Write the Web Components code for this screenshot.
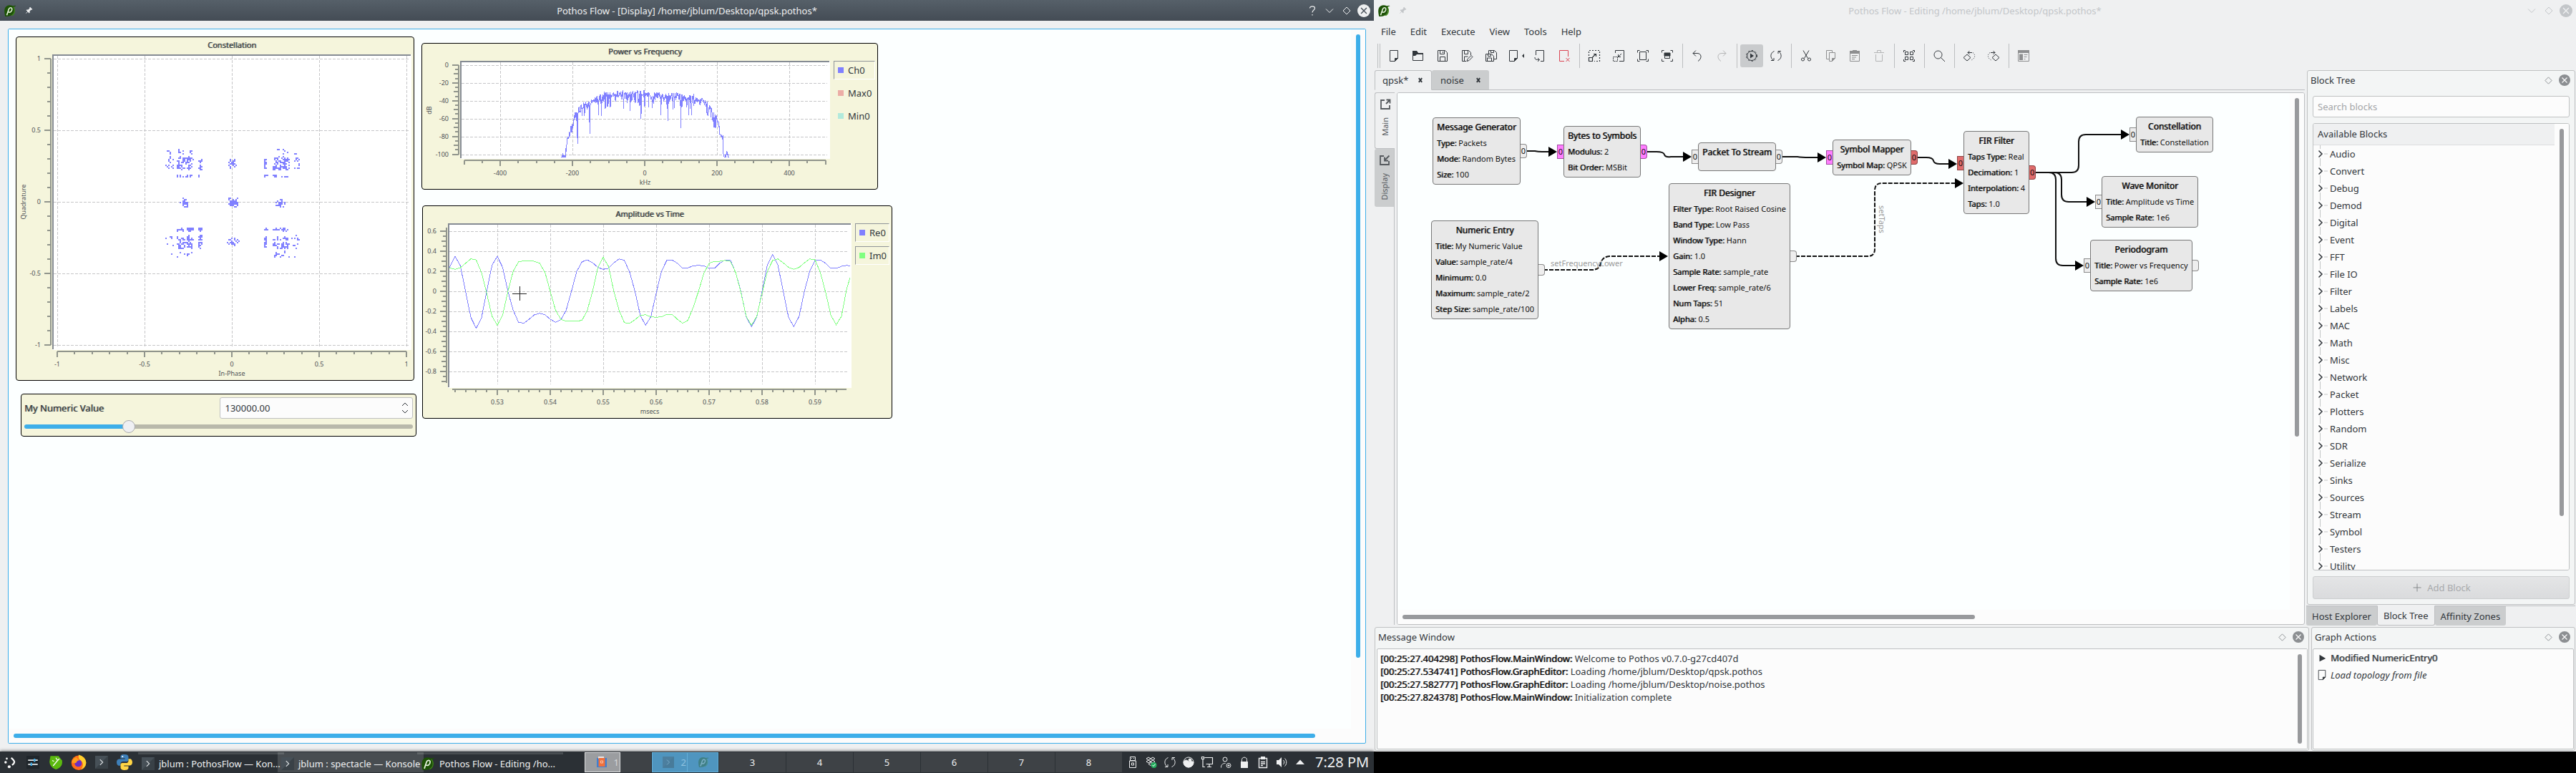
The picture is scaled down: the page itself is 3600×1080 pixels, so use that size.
<!DOCTYPE html>
<html lang="en">
<head>
<meta charset="utf-8">
<title>Pothos Flow</title>
<style>
html,body{margin:0;height:100%;background:#000}
body{font:13px/18px "Noto Sans","Open Sans",sans-serif;color:#31363b;overflow:hidden}
</style>
</head>
<body>
<pothos-desktop></pothos-desktop>
<script>
const BASE = `
*{box-sizing:border-box}
button{font:inherit;color:inherit;border:0;background:none;padding:0;margin:0}
ul{list-style:none;margin:0;padding:0}
h2,h3,p{margin:0;font:inherit}
.strong{text-shadow:1px 0 0 color-mix(in srgb,currentColor 60%,transparent)}
`;

/* Shared base: each element supplies css() and html() for its own shadow root. */
class FlowElement extends HTMLElement {
  connectedCallback() {
    if (this.shadowRoot) return;
    this.attachShadow({ mode: 'open' }).innerHTML = `<style>${BASE}${this.css()}</style>${this.html()}`;
  }
  css() { return ':host{display:block}'; }
  html() { return '<slot></slot>'; }
}

/* ---------- icons, drawn on a 16 unit grid ---------- */
const PAGE = '<path d="M2.5.5h11v11l-4 4h-7z"/><path d="M9.5 15.5v-4h4z" fill="currentColor"/>';
const FLOPPY = '<path d="M1.5.5h10l3 3v12h-13zM4.5.5v5h6v-5M8.5 2v2M4.5 15.5v-6h7v6"/>';
const KONSOLE = '<rect x="0" y="0" width="16" height="16" fill="#475057" stroke="none"/><path d="M0 16L16 0v16z" fill="#394147" stroke="none"/><path d="M6 4.500l3.500 3.500L6 11.500" stroke="#dfe3e6"/>';
const ICONS = {
  leaf: '<path d="M14.500 1.500c-1 0-2 .5-3 .6C8 .2 3.500 1 1.800 4.500 .6 7 1 11 2 15c4 .3 8-.5 10-3.500 1.500-2.500 1.500-5.500.6-8 .8-.8 1.400-1 3-1.300z" fill="#1d5206" stroke="none"/><path d="M12 3c3 4 2 9-2 11" stroke="#3d8a12"/><path d="M4 13.500L6.500 6C7.200 3.800 10.500 3.500 10.500 6c0 3-2.800 5-4.800 3.300" stroke="#e8f3e0" stroke-width="1.400"/>',
  pin: '<g transform="rotate(45 8 8)"><path d="M5 1h6v2h-1v4l2 2v1.500H4V9l2-2V3H5z" fill="currentColor" stroke="none"/><path d="M8 10v5"/></g>',
  help: '<path d="M4.500 4.500C4.500 1 11.500 1 11.500 4.500 11.500 7 8 7 8 10.500M8 13v1.500" stroke-width="1.200"/>',
  down: '<path d="M3 5.500l5 5 5-5"/>',
  diamond: '<path d="M8 3l5 5-5 5-5-5z"/>',
  close: '<circle cx="8" cy="8" r="8" fill="currentColor" stroke="none"/><path d="M4.500 4.500l7 7M11.500 4.500l-7 7" stroke="var(--hole,#fff)" stroke-width="1.200"/>',
  x: '<path d="M4.500 3.500l7 9M11.500 3.500l-7 9" stroke-width="3"/>',
  new: PAGE,
  open: '<path d="M.5 1.500v13h14v-10h-7l-2-3z"/><path d="M0 1h6l2 3h7v2H6L4 8H0z" fill="currentColor" stroke="none"/>',
  save: FLOPPY,
  saveas: '<path d="M7 15.500H1.500V.5h9l3 3V7M4.500.5v5h5v-5M4.500 15v-6h5M8 15.500l1-3 5-5 2 2-5 5z"/>',
  saveall: '<path d="M.5 5.500h8l3 3v7h-11zM2.500 15v-4h6v4M3.500 6v2.500h4V6M4.500 5V.5h8l3 3v9H12M7.500 1v2.500h4V1"/>',
  reload: PAGE,
  exportpage: '<path d="M2.500 7V.5h11v15H9M1 10c0 3 1 3.500 6 3.500M5 11l2.500 2.500L5 16"/>',
  closepage: '<g stroke="#da4453"><path d="M8 15.500H1.500V.5h12V9M10.500 11l5 5M15.500 11l-5 5"/></g>',
  zoomin: '<path d="M.5 10.500h5v5h-5zM5.500 10L10 5.500M7 5.500h3.500V9" stroke-width="1.200"/><path d="M.5 8V.5h15v15H8" stroke-dasharray="2 2" stroke-width="1.200"/>',
  zoomout: '<path d="M3.500 4V.5h12v15H9M12 5l-4 4M7.500 6v3.500H11"/><path d="M.5 15.500v-6h6v6z" stroke-dasharray="2 1"/>',
  zoomorig: '<path d="M3.500 2.500h9v11h-9zM.5 3.500v-3h3M12.500.5h3v3M15.500 12.500v3h-3M3.500 15.500h-3v-3"/>',
  zoomfit: '<path d="M4.500 4.500h7v7h-7zM.5 3.500v-3h3M12.500.5h3v3M15.500 12.500v3h-3M3.500 15.500h-3v-3"/><path d="M4 4h8v4H4z" fill="currentColor"/>',
  undo: '<path d="M6 .5l-4 4 4 4M2 4.500h6c6 0 7 7 1 11"/>',
  redo: '<path d="M10 .5l4 4-4 4M14 4.500H8c-6 0-7 7-1 11"/>',
  run: '<circle cx="8" cy="8" r="6.500"/><circle cx="8" cy="8" r="7.500" stroke-dasharray="2 3"/><path d="M6 4.500l5 3.500-5 3.500z" fill="currentColor" stroke="none"/>',
  cycle: '<path d="M5.500 1.500C-.5 4-.5 11 4.500 14.500M1 14.500h4V11M10.500 14.500c6-2.500 6-9.500 1-13M15 1.500h-4V5"/>',
  cut: '<path d="M4 .5l6.500 11M12 .5L5.500 11.500"/><circle cx="3.500" cy="13" r="2"/><circle cx="12.500" cy="13" r="2"/>',
  copy: '<path d="M6 12.500H2.500V.5h8V3M6.500 3.500h8v8l-4 4h-4z"/><path d="M10.500 15.500v-4h4z" fill="currentColor"/>',
  paste: '<path d="M1.500 1.500h13v14h-13z"/><path d="M1 1h4v-1h6v1h4v4H1zM4 7h8v1H4zM4 9.500h6v1H4zM4 12h4v1H4z" fill="currentColor" stroke="none"/>',
  trash: '<path d="M1 3.500h14M5.500 3V.5h5V3M3.500 6v9.500h9V6"/>',
  grid: '<path d="M2.500 2.500h4v4h-4zM9.500 2.500h4v4h-4zM2.500 9.500h4v4h-4zM9.500 9.500h4v4h-4zM.5 3v-2.500H3M13 .5h2.500V3M15.500 13v2.500H13M3 15.500H.5V13"/>',
  find: '<circle cx="6.500" cy="6.500" r="5.500"/><path d="M10.500 10.500l5.500 5.500"/>',
  rotl: '<path d="M5 6l5 4.500-5 4.500-5-4.500zM12 3.500H6M8.500 1L6 3.500 8.500 6"/><path d="M13 3.500c4 3 4 8-3 11" stroke-dasharray="1 2"/>',
  rotr: '<path d="M11 6l5 4.500-5 4.500-5-4.500zM4 3.500h6M7.500 1L10 3.500 7.500 6"/><path d="M3 3.500c-4 3-4 8 3 11" stroke-dasharray="1 2"/>',
  props: '<path d="M.5.5h15v15H.5z"/><path d="M0 0h16v4H0zM2 5.500h5v8.500H2zM8.500 6h5v1h-5zM8.500 9h4v1h-4zM8.500 12h2v1h-2z" fill="currentColor" stroke="none"/>',
  popout: '<path d="M7 2H2v12h12V9M9 7l5-5M9.500 1.500h5v5" stroke-width="1.800"/>',
  popin: '<path d="M7 2H2v12h12V9M14.500 1.500L8 8M8 3.500v5h5" stroke-width="1.800"/>',
  plus: '<path d="M8 2.500v11M2.500 8h11"/>',
  play: '<path d="M3 1l1 2M4 3l10 6-10 5z" fill="currentColor" stroke="none"/>',
  kmenu: '<g fill="#fcfcfc" stroke="none"><circle cx="4" cy="3.500" r="1.200"/><circle cx="2.500" cy="8" r="1.500"/><circle cx="7" cy="13.500" r="1.800"/></g><path d="M9.500 2.500c5 4 5 6 1 9" stroke="#fcfcfc" stroke-width="2"/>',
  settings: '<rect width="16" height="16" fill="#20262b" stroke="none"/><path d="M2 5.500h12M2 10.500h12" stroke="#e4e8ea" stroke-width="1.500"/><path d="M10 3.500v4M6 8.500v4" stroke="#3daee9" stroke-width="2"/>',
  green: '<path d="M2 1h9l4 5c1 6-3 9-7 10-5-2-7-5-7-9z" fill="#5bb90f" stroke="none"/><path d="M5 12l5-6M4 6l2 1M10 6l2-2M10 6L8 3" stroke="#fff"/>',
  firefox: '<circle cx="8" cy="8.500" r="7.500" fill="#ff6a1a" stroke="none"/><path d="M8 .3c4 1 7.500 4 7.500 8 0 3-2 6-5 7 3-4 2-8-1-9.500C8 5 7.500 2.500 8 .3z" fill="#ffd02e" stroke="none"/><circle cx="7.500" cy="9" r="3.600" fill="#6a2fc4" stroke="none"/><path d="M1 8c1-4 3-5 5-5 1 2 2 2.500 3 3-2 0-3 1-3.500 2.500C4 9 2 9 1 8z" fill="#ff9d1a" stroke="none"/>',
  konsole: KONSOLE,
  python: '<path d="M8 0C4.500 0 4 1.200 4 2.500V4h4.500v.8H2.500C.8 4.800 0 6.500 0 8s.8 3.500 2.500 3.500H4V9.500C4 8 5 7.200 6.500 7.200h3.800c1 0 1.700-.7 1.700-1.700v-3C12 .8 10.500 0 8 0z" fill="#3e7fb8" stroke="none"/><path d="M8 16c3.500 0 4-1.200 4-2.500V12H7.500v-.8h6c1.700 0 2.500-1.700 2.500-3.200s-.8-3.500-2.500-3.500H12v2C12 8 11 8.800 9.500 8.800H5.700C4.700 8.800 4 9.500 4 10.500v3c0 1.700 1.500 2.500 4 2.500z" fill="#ffd545" stroke="none"/><circle cx="6" cy="2.200" r=".8" fill="#fff" stroke="none"/>',
  usb: '<path d="M4.500.5h7v5h-7zM3.500 6h9v9.500h-9zM6 2.500h1M9 2.500h1M6.500 9h3v3h-3z"/>',
  dropbox: '<path d="M4 1l3 2-3 2-3-2zM10 1l3 2-3 2-3-2zM4 5l3 2-3 2-3-2zM10 5l3 2-3 2-3-2zM7 8.500l3 2-3 2-3-2z"/><circle cx="11.500" cy="12" r="4" fill="#27ae60" stroke="none"/><path d="M9.500 12l1.500 1.500 2.500-3" stroke="#fff"/>',
  disc: '<circle cx="8" cy="8" r="7"/><path d="M1 8a7 7 0 0 0 14 0c-3-3-6 1-8-2-2-2-5-1-6 2z" fill="currentColor"/><circle cx="10" cy="5" r="2" fill="currentColor"/>',
  net: '<path d="M4.500 1.500h11v9h-9M11 11v3M8 14.500h6M.5.500h3v3h-3zM2 4v10.500h3" stroke-width="1.200"/>',
  user: '<circle cx="7" cy="4" r="3"/><path d="M1.500 15.500c0-5 3-6 6-6"/><circle cx="12" cy="12.500" r="3"/><path d="M10.500 12.500h3M12 11v3"/>',
  lock: '<path d="M4.500 7V4.500c0-4.500 7-4.500 7 0V7"/><path d="M3 7h10v9H3z" fill="currentColor" stroke="none"/>',
  clip: '<path d="M2.500 2.500h11v13h-11zM5 7.500h6M5 10h6M5 12.500h3" stroke-width="1.400"/><path d="M5 0h6v4H5z" fill="currentColor" stroke="none"/>',
  volume: '<path d="M1 5h3l4-4v14l-4-4H1z" fill="currentColor" stroke="none"/><path d="M10.500 5c1.500 2 1.500 4 0 6M12.500 2.500c3 3 3 8 0 11"/>',
  up: '<path d="M2 11l6-6.500 6 6.500z" fill="currentColor" stroke="none"/>',
  files: '<path d="M1 2h14v13H1z" fill="#3f7fd0" stroke="none"/><path d="M3 0h8v3H3z" fill="#e8e8e8" stroke="none"/><path d="M3.500 2h9v12h-9z" fill="#f0703c" stroke="none"/><path d="M6.500 6h3v3h-3z" stroke="#fbc4a8"/>'
};
class FlowIcon extends FlowElement {
  css() {
    const s = this.getAttribute('size') || 16;
    return `:host{display:inline-flex;flex:none;width:${s}px;height:${s}px}svg{width:100%;height:100%;overflow:visible}`;
  }
  html() {
    return `<svg viewBox="0 0 16 16" fill="none" stroke="currentColor" aria-hidden="true">${ICONS[this.getAttribute('name')] || ''}</svg>`;
  }
}
customElements.define('flow-icon', FlowIcon);

/* Scroll track: "shown" and "rest" are the shares of thumb and empty track. */
class ScrollTrack extends FlowElement {
  css() {
    return `:host{display:flex;padding:7px;background:#fcfcfc}
    :host([vertical]){flex-direction:column;width:20px}
    :host(:not([vertical])){height:20px}
    .thumb{border-radius:3px;background:var(--thumb,#98999c);flex:${this.getAttribute('shown')} 0 0}
    .rest{flex:${this.getAttribute('rest')} 0 0}`;
  }
  html() { return '<div class="thumb"></div><div class="rest"></div>'; }
}
customElements.define('scroll-track', ScrollTrack);

class WindowBar extends FlowElement {
  css() {
    return `:host{display:grid;grid-template-columns:1fr auto 1fr;align-items:center;height:29px;padding:0 5px;color:#c3c6c9;--hole:#eff0f1}
    :host([active]){background:linear-gradient(#566069,#444c55);color:#eff0f1;--hole:#444c55}
    .start,.end{display:flex;align-items:center;gap:6px}
    .start{gap:8px}
    .start button{width:17px}
    .end{justify-content:flex-end}
    button{display:flex;width:18px;justify-content:center}
    h2{white-space:nowrap}`;
  }
  html() {
    const active = this.hasAttribute('active');
    return `<div class="start"><flow-icon name="leaf" size="18"></flow-icon><button aria-label="Keep above"><flow-icon name="pin" size="12"></flow-icon></button></div>
    <h2><slot></slot></h2>
    <div class="end">${active ? '<button aria-label="Help"><flow-icon name="help"></flow-icon></button>' : ''}
    <button aria-label="Minimize"><flow-icon name="down"></flow-icon></button>
    <button aria-label="Maximize"><flow-icon name="diamond"></flow-icon></button>
    <button aria-label="Close"><flow-icon name="close" size="18"></flow-icon></button></div>`;
  }
}
customElements.define('window-bar', WindowBar);

/* ---------- plots ---------- */
function seeded(a) {
  return () => {
    a = a + 0x6D2B79F5 | 0;
    let t = Math.imul(a ^ a >>> 15, 1 | a);
    t = t + Math.imul(t ^ t >>> 7, 61 | t) ^ t;
    return ((t ^ t >>> 14) >>> 0) / 4294967296;
  };
}
const range = (a, b, step) => Array.from({ length: Math.round((b - a) / step) + 1 }, (_, i) => +(a + i * step).toFixed(4));

function constellationPoints() {
  const rnd = seeded(11), pts = [];
  const bands = [[.178, .195], [.178, .195], [.23, .265], [.23, .265], [.235, .262], [.27, .29], [.285, .32], [.285, .32], [.285, .32], [.34, .38]];
  const mag = () => { const b = bands[Math.floor(rnd() * bands.length)]; return b[0] + rnd() * (b[1] - b[0]); };
  for (const sx of [-1, 1]) for (const sy of [-1, 1])
    for (let i = 0; i < 150; i++) {
      const mx = mag(), my = mag();
      if (mx > .33 && my < .2 || my > .33 && mx < .2) continue;
      pts.push([sx * mx, sy * my]);
    }
  const near = () => (rnd() + rnd() - 1) * .036;
  for (let i = 0; i < 65; i++) pts.push([near(), near()]);
  for (const [cx, cy] of [[-.275, 0], [.275, 0], [0, .275], [0, -.275]])
    for (let i = 0; i < 28; i++) pts.push([cx + near(), cy + near()]);
  return pts;
}

const NOTCHES = { '-186': -88, '-152': -77, '-128': -56, '-120': -57, '-58': -49, '-40': -51, '-10': -60, '45': -56, '64': -63, '78': -50, '100': -71, '122': -56, '130': -56, '192': -70, '196': -71 };
const ENVELOPE = [[-236, -106], [-232, -101], [-228, -96], [-222, -99], [-218, -88], [-214, -77], [-206, -70], [-200, -62], [-190, -50], [-175, -43], [-150, -38], [-115, -30], [-80, -29], [-50, -28], [0, -28], [50, -31], [85, -30], [115, -33], [135, -31], [160, -37], [180, -43], [190, -50], [200, -56], [208, -70], [216, -78], [221, -104], [226, -93], [232, -99], [236, -106]];
function spectrumPoints() {
  const rnd = seeded(5), pts = [];
  for (let f = -236; f <= 236; f++) {
    let i = 1;
    while (ENVELOPE[i][0] < f) i++;
    const [x0, y0] = ENVELOPE[i - 1], [x1, y1] = ENVELOPE[i];
    const top = y0 + (y1 - y0) * (f - x0) / (x1 - x0);
    pts.push([f, f in NOTCHES ? NOTCHES[f] : top - rnd() * 8 - Math.pow(rnd(), 6) * 14]);
  }
  return pts;
}

const RE = [.24,.35,.26,0,-.26,-.37,-.27,0,.26,.35,.24,0,-.19,-.31,-.32,-.28,-.235,-.22,-.235,-.28,-.31,-.285,-.19,0,.2,.295,.315,.285,.24,.22,.23,.285,.325,.31,.19,0,-.24,-.34,-.255,-.02,.2,.31,.315,.28,.23,.235,.255,.26,.255,.23,.23,.28,.315,.315,.19,0,-.255,-.355,-.26,0,.265,.37,.26,0,-.26,-.355,-.25,0,.2,.31,.315,.28,.23,.23,.25,.26,.25];
const IM = [.235,.22,.235,.28,.325,.315,.19,-.02,-.25,-.34,-.24,0,.2,.295,.305,.305,.3,.28,.19,0,-.19,-.28,-.3,-.3,-.3,-.29,-.19,0,.24,.34,.25,0,-.19,-.315,-.32,-.285,-.24,-.235,-.255,-.26,-.255,-.23,-.23,-.28,-.32,-.29,-.16,0,.18,.28,.3,.3,.31,.3,.19,-.01,-.25,-.34,-.25,-.02,.2,.31,.325,.285,.24,.22,.24,.285,.325,.315,.19,-.01,-.24,-.335,-.25,.03,.2];
const wave = list => list.map((v, i) => [.521 + i * .001, v]);

const PLOTS = {
  constellation: {
    title: 'Constellation', cols: [50, 502, 3], height: 413, foot: 42,
    x: { zero: 251, scale: 244, major: range(-1, 1, .5), minor: range(-1, 1, .1), mid: [], span: [-1, 1], label: 'In-Phase' },
    y: { zero: 206, scale: -200, major: range(-1, 1, .5), minor: range(-1, 1, .1), mid: [], span: [-1, 1], label: 'Quadrature', at: -40 },
    dots: constellationPoints(), lines: []
  },
  spectrum: {
    title: 'Power vs Frequency', cols: [53, 517, 66], height: 137, foot: 42,
    x: { zero: 258, scale: .505, major: range(-400, 400, 200), minor: range(-450, 450, 50), mid: [-500, 500], span: [-500, 500], label: 'kHz' },
    y: { zero: 6, scale: -1.245, major: range(-100, 0, 20), minor: range(-100, 0, 5), mid: range(-90, -10, 20), span: [-100, 0], label: 'dB', at: -43 },
    lines: [['#8080ff', spectrumPoints()]],
    legend: [['Ch0', '#8080ff', 1], ['Max0', '#ecada6', 0], ['Min0', '#b2eadc', 0]]
  },
  wave: {
    title: 'Amplitude vs Time', cols: [35, 564, 56], height: 230, foot: 42,
    x: { zero: -3853, scale: 7400, major: range(.53, .59, .01), minor: range(.522, .594, .002), mid: [], span: [.5215, .596], label: 'msecs' },
    y: { zero: 95, scale: -139.5, major: range(-.8, .6, .2), minor: range(-.9, .6, .05), mid: range(-.9, .5, .2), span: [-.92, .64], label: '', at: 0 },
    lines: [['#8080ff', wave(RE)], ['#80ff80', wave(IM)]], cross: [100, 98],
    legend: [['Re0', '#8080ff', 1], ['Im0', '#80ff80', 1]]
  }
};

class PlotWidget extends FlowElement {
  css() {
    const c = this.cfg = PLOTS[this.getAttribute('kind')];
    return `:host{display:grid;border:1px solid #000;border-radius:4px;background:#f5f5dc;
      grid-template-columns:${c.cols[0]}px ${c.cols[1]}px ${c.cols[2]}px;grid-template-rows:24px ${c.height}px ${c.foot}px}
    h3{grid-column:2;text-align:center;font-size:11px;line-height:22px}
    svg{grid-column:2;grid-row:2;width:100%;height:100%;overflow:visible}
    text{font-size:9px;fill:#4d5156}
    .axis{stroke:#91958c;stroke-width:2;fill:none;shape-rendering:crispEdges}
    .grid{stroke:#c6c6c8;stroke-dasharray:4 2;fill:none;shape-rendering:crispEdges}
    .trace{fill:none;shape-rendering:crispEdges}
    .legend{grid-column:3;grid-row:2;display:flex;flex-direction:column;gap:6px;padding:0 3px 0 5px}
    .legend button{display:flex;align-items:center;gap:6px;height:26px;padding-left:5px;border:1px solid transparent}
    .legend button[aria-pressed=true]{border-color:#8f9498 #fff #fff #8f9498}
    .legend i{width:8px;height:8px;background:var(--c)}`;
  }
  html() {
    const c = this.cfg, w = c.cols[1], h = c.height;
    const X = v => Math.round(c.x.zero + v * c.x.scale), Y = v => Math.round(c.y.zero + v * c.y.scale);
    const grid = c.x.major.map(v => `M${X(v) + .5} 2V${h - 5}`).join('') + c.y.major.map(v => `M2 ${Y(v) + .5}H${w - 4}`).join('');
    const xt = (l, n) => l.map(v => `M${X(v)} ${h + 2}v${n}`).join('');
    const yt = (l, n) => l.map(v => `M-2 ${Y(v)}h-${n}`).join('');
    const axis = `M${X(c.x.span[0])} ${h + 2}H${X(c.x.span[1])}` + xt(c.x.major, 8) + xt(c.x.minor, 4) + xt(c.x.mid, 6)
      + `M-2 ${Y(c.y.span[0])}V${Y(c.y.span[1])}` + yt(c.y.major, 9) + yt(c.y.minor, 5) + yt(c.y.mid, 7);
    const labels = c.x.major.map(v => `<text x="${X(v)}" y="${h + 23}" text-anchor="middle">${v}</text>`).join('')
      + c.y.major.map(v => `<text x="-16" y="${Y(v) + 3}" text-anchor="end">${v}</text>`).join('')
      + `<text x="${w / 2}" y="${h + 36}" text-anchor="middle">${c.x.label}</text>`
      + (c.y.label ? `<text transform="translate(${c.y.at + 3} ${Math.round((Y(c.y.span[0]) + Y(c.y.span[1])) / 2)}) rotate(-90)" text-anchor="middle">${c.y.label}</text>` : '');
    const traces = c.lines.map(([col, pts]) => `<polyline class="trace" stroke="${col}" points="${pts.map(([x, y]) => (c.x.zero + x * c.x.scale).toFixed(1) + ',' + (c.y.zero + y * c.y.scale).toFixed(1)).join(' ')}"/>`).join('');
    const snap = v => Math.round(v / 2) * 2;
    const dots = (c.dots || []).map(([x, y]) => `M${snap(X(x))} ${snap(Y(y))}h2v2h-2z`).join('');
    const cross = c.cross ? `<path d="M${c.cross[0] - 10} ${c.cross[1] + .5}h20M${c.cross[0] + .5} ${c.cross[1] - 10}v20" stroke="#222" shape-rendering="crispEdges"/>` : '';
    const id = 'clip-' + this.getAttribute('kind');
    return `<h3 class="strong">${c.title}</h3>
    <svg role="img" aria-label="${c.title}">
      <clipPath id="${id}"><rect x="2" y="2" width="${w - 4}" height="${h - 4}"/></clipPath>
      <rect width="${w}" height="${h}" fill="#fff"/><path class="grid" d="${grid}"/>
      <g clip-path="url(#${id})">${traces}<path d="${dots}" fill="#8080ff"/></g>
      <path d="M1 ${h - 1}V1H${w - 1}" fill="none" stroke="#858b93" stroke-width="2"/>
      <path class="axis" d="${axis}"/>${labels}${cross}
    </svg>
    ${c.legend ? `<div class="legend">${c.legend.map(([n, col, on]) => `<button aria-pressed="${!!on}"><i style="--c:${col}"></i>${n}</button>`).join('')}</div>` : ''}`;
  }
}
customElements.define('plot-widget', PlotWidget);

class NumericWidget extends FlowElement {
  css() {
    return `:host{display:flex;flex-direction:column;border:1px solid #000;border-radius:4px;background:#f5f5dc;padding:4px}
    .row{display:grid;grid-template-columns:1fr 1fr;gap:2px;align-items:center}
    .spin{display:flex;align-items:center;height:30px;background:#fcfcfc;border:1px solid #bfc1c2;border-radius:3px;padding:0 5px 0 7px}
    .spin input{flex:1;min-width:0;border:0;outline:0;background:none;font:inherit;color:inherit;padding:0;appearance:textfield}
    .spin input::-webkit-inner-spin-button{display:none}
    .arrows{display:flex;flex-direction:column}
    .arrows svg{width:10px;height:10px;display:block}
    input[type=range]{appearance:none;margin:2px 0 0;height:18px;width:100%;background:none}
    input[type=range]::-webkit-slider-runnable-track{height:6px;border-radius:3px;background:linear-gradient(90deg,#3daee9 27%,#b9b9ab 27%)}
    input[type=range]::-webkit-slider-thumb{appearance:none;width:18px;height:18px;margin-top:-6px;border-radius:50%;background:#eff0f3;border:1px solid #a9abad}`;
  }
  html() {
    return `<div class="row"><label for="value" class="strong">My Numeric Value</label>
    <div class="spin"><input id="value" type="number" value="130000.00" step="0.01">
    <div class="arrows"><button aria-label="Increase"><svg viewBox="0 0 10 10" fill="none" stroke="#31363b"><path d="M1 7l4-4 4 4"/></svg></button><button aria-label="Decrease"><svg viewBox="0 0 10 10" fill="none" stroke="#31363b"><path d="M1 3l4 4 4-4"/></svg></button></div></div></div>
    <input type="range" min="0" max="500000" step="10000" value="130000" aria-label="My Numeric Value">`;
  }
}
customElements.define('numeric-widget', NumericWidget);

/* ---------- display window ---------- */
class DisplayWindow extends FlowElement {
  css() {
    return `:host{display:flex;flex-direction:column;min-height:0;background:#eff0f1}
    .frame{flex:1;margin:11px;border:1px solid #3daee9;border-radius:2px;display:grid;grid-template:1fr auto/1fr auto;background:#fcfcfc;--thumb:#3daee9}
    .canvas{position:relative;background:#fcffff}
    .canvas>*{position:absolute}
    .c{left:10px;top:10px;width:557px;height:481px}
    .s{left:577px;top:19px;width:638px;height:205px}
    .w{left:578px;top:246px;width:657px;height:298px}
    .n{left:17px;top:509px;width:553px;height:60px}`;
  }
  html() {
    return `<window-bar active>Pothos Flow - [Display] /home/jblum/Desktop/qpsk.pothos*</window-bar>
    <div class="frame"><div class="canvas">
      <plot-widget class="c" kind="constellation"></plot-widget>
      <plot-widget class="s" kind="spectrum"></plot-widget>
      <plot-widget class="w" kind="wave"></plot-widget>
      <numeric-widget class="n"></numeric-widget>
    </div><scroll-track vertical shown="871" rest="92"></scroll-track><scroll-track shown="1819" rest="43"></scroll-track></div>`;
  }
}
customElements.define('display-window', DisplayWindow);

/* ---------- panel at the bottom of the first screen ---------- */
class TaskBar extends FlowElement {
  css() {
    return `:host{display:flex;height:30px;background:#2b3035;color:#eff0f1;position:relative;box-shadow:0 -1px 4px rgba(0,0,0,.5)}
    .launch{display:flex;align-items:center;gap:10px;padding:0 8px 0 3px}
    .launch button{display:flex;justify-content:center;width:22px}
    .tasks{display:flex;padding:1px 0}
    .tasks button{display:flex;align-items:center;gap:6px;width:204px;padding-left:5px;margin-right:-9px;border-top:3px solid rgba(255,255,255,.14);white-space:nowrap;overflow:hidden}
    .tasks button.on{background:rgba(255,255,255,.14);border-top-color:transparent}
    .pager{display:flex;margin-left:auto;padding:1px 0;flex:none}
    .pager button{width:93px;margin-right:1px;background:#3e4246;display:flex;justify-content:center;align-items:center}
    .pager button.has{justify-content:flex-start}
    .mini{display:flex;align-items:center;justify-content:flex-end;gap:9px;width:50px;height:100%;padding-right:1px;background:#9b9da0;border:1px solid #dfe0e1;color:#d5d7d9}
    .pager .cur{background:#4f95bf;color:#a9d3ea;outline:1px solid #63aed8;outline-offset:-1px}
    .cur .mini{background:none;border-color:transparent #63aed8 transparent transparent;gap:10px;color:#8fc3e0}
    .cur flow-icon{opacity:.3}
    .cur>flow-icon{margin-left:14px}
    .tray{display:flex;align-items:center;gap:10px;padding:0 6px}
    .tray button{display:flex}
    time{font-size:20px;line-height:30px;width:89px;flex:none;padding-left:7px;white-space:nowrap}`;
  }
  html() {
    const b = (n, l, s) => `<button aria-label="${l}"><flow-icon name="${n}" size="${s}"></flow-icon></button>`;
    return `<div class="launch">${b('kmenu', 'Menu', 18)}${b('settings', 'Settings', 18)}${b('green', 'Editor', 20)}${b('firefox', 'Firefox', 22)}${b('konsole', 'Konsole', 18)}${b('python', 'Python', 22)}</div>
    <div class="tasks"><button><flow-icon name="konsole" size="18"></flow-icon>jblum : PothosFlow — Kon...</button>
    <button class="on"><flow-icon name="konsole" size="18"></flow-icon>jblum : spectacle — Konsole</button>
    <button><flow-icon name="leaf" size="20"></flow-icon>Pothos Flow - Editing /ho...</button></div>
    <div class="pager"><button class="has"><span class="mini"><flow-icon name="files"></flow-icon>1</span></button>
    <button class="has cur"><span class="mini"><flow-icon name="konsole"></flow-icon>2</span><flow-icon name="leaf"></flow-icon></button>
    ${[3, 4, 5, 6, 7, 8].map(n => `<button>${n}</button>`).join('')}</div>
    <div class="tray">${['usb', 'dropbox', 'cycle', 'disc', 'net', 'user', 'lock', 'clip', 'volume', 'up'].map(n => b(n, n, 16)).join('')}</div>
    <time>7:28 PM</time>`;
  }
}
customElements.define('task-bar', TaskBar);

/* ---------- flow graph ---------- */
const BLOCKS = [
  { n: 'Message Generator', x: 49, y: 34, w: 121, p: ['Type: Packets', 'Mode: Random Bytes', 'Size: 100'], out: ['0'] },
  { n: 'Bytes to Symbols', x: 232, y: 46, w: 106, p: ['Modulus: 2', 'Bit Order: MSBit'], in: ['0 m'], out: ['0 m'] },
  { n: 'Packet To Stream', x: 420, y: 69, w: 108, p: [], in: ['0'], out: ['0'] },
  { n: 'Symbol Mapper', x: 608, y: 65, w: 108, p: ['Symbol Map: QPSK'], in: ['0 m'], out: ['0 r'] },
  { n: 'FIR Filter', x: 791, y: 53, w: 92, p: ['Taps Type: Real', 'Decimation: 1', 'Interpolation: 4', 'Taps: 1.0'], in: ['0 r', 'slot'], out: ['0 r'] },
  { n: 'FIR Designer', x: 379, y: 126, w: 168, p: ['Filter Type: Root Raised Cosine', 'Band Type: Low Pass', 'Window Type: Hann', 'Gain: 1.0', 'Sample Rate: sample_rate', 'Lower Freq: sample_rate/6', 'Num Taps: 51', 'Alpha: 0.5'], out: ['blank'] },
  { n: 'Numeric Entry', x: 47, y: 178, w: 148, p: ['Title: My Numeric Value', 'Value: sample_rate/4', 'Minimum: 0.0', 'Maximum: sample_rate/2', 'Step Size: sample_rate/100'], out: ['blank'] },
  { n: 'Constellation', x: 1032, y: 33, w: 106, p: ['Title: Constellation'], in: ['0'] },
  { n: 'Wave Monitor', x: 984, y: 116, w: 134, p: ['Title: Amplitude vs Time', 'Sample Rate: 1e6'], in: ['0'] },
  { n: 'Periodogram', x: 968, y: 205, w: 142, p: ['Title: Power vs Frequency', 'Sample Rate: 1e6'], in: ['0'], out: ['blank'] }
];
class FlowBlock extends FlowElement {
  css() {
    return `:host{display:flex;align-items:center;color:#111;font-size:11px;line-height:22px}
    .ports{display:flex;flex-direction:column;gap:6px;width:9px;flex:none}
    .port{height:20px;border:1px solid #8a8a8a;background:#eee;line-height:18px;text-align:center}
    .in .port{border-right:0}
    .out .port{border-left:0;border-radius:0 4px 4px 0}
    .port.m{background:#ff7dff;border-color:#a04fa0}.port.r{background:#e06c6c;border-color:#8f4444}
    .port.blank{height:16px}
    .in .slot{visibility:hidden}
    .body{flex:1;min-height:40px;border:1px solid #777;border-radius:4px;background:#e8e8e8;padding:2px 5px;white-space:nowrap}
    h3{font-size:12px;text-align:center;color:#000}
    p b{font-weight:400;color:#000}`;
  }
  html() {
    const b = this.block;
    const ports = (cls, list) => `<div class="ports ${cls}">${(list || []).map(s => { const [t, c] = s.split(' '); return t === '0' ? `<div class="port ${c || ''}">0</div>` : `<div class="port ${t}"></div>`; }).join('')}</div>`;
    return `${ports('in', b.in)}<div class="body"><h3 class="strong">${b.n}</h3>${b.p.map(s => { const i = s.indexOf(':') + 1; return `<p><b class="strong">${s.slice(0, i)}</b>${s.slice(i)}</p>`; }).join('')}</div>${ports('out', b.out)}`;
  }
}
customElements.define('flow-block', FlowBlock);

class FlowCanvas extends FlowElement {
  css() {
    return `:host{display:block;position:relative;background:#fcffff;overflow:hidden}
    flow-block{position:absolute}
    svg{position:absolute;width:100%;height:100%;overflow:visible}
    .wire{fill:none;stroke:#111;stroke-width:2}
    .dash{stroke-dasharray:6 2}
    text{font-size:11px;fill:#9a9a9a}`;
  }
  html() {
    const wires = ['M180 81h12q4 1 10 1h10', 'M348 82h14q10 0 11 4t9 3H401', 'M537 89h22q6 1 16 1H589', 'M725 90h14q9 0 10 4.500t9 4.500H772',
      'M892 111H942q10 0 10-10V68q0-10 10-10H1012', 'M892 111H918q10 0 10 10V142q0 10 10 10H964', 'M892 111H910q10 0 10 10V231q0 10 10 10H949'];
    const dashed = ['M204 247H272q10 0 12-9t12-10H367', 'M556 228H657q10 0 10-10V136q0-10 10-10H780'];
    const tips = [[223, 82], [411, 89], [599, 90], [782, 99], [1023, 58], [975, 152], [959, 241], [378, 228], [791, 126]];
    return `<svg aria-hidden="true"><path class="wire" d="${wires.join('')}"/><path class="wire dash" d="${dashed.join('')}"/>
      <path d="${tips.map(([x, y]) => `M${x} ${y}l-12-7v14z`).join('')}"/>
      <text x="214" y="242">setFrequencyLower</text><text transform="translate(673 157) rotate(90)">setTaps</text></svg>
    <div id="blocks"></div>`;
  }
  connectedCallback() {
    super.connectedCallback();
    const holder = this.shadowRoot.getElementById('blocks');
    if (holder.childElementCount) return;
    for (const b of BLOCKS) {
      const el = document.createElement('flow-block');
      el.block = b;
      el.style.cssText = `left:${b.x - 9}px;top:${b.y}px;width:${b.w + 18}px`;
      holder.append(el);
    }
  }
}
customElements.define('flow-canvas', FlowCanvas);

/* ---------- docks ---------- */
class DockPanel extends FlowElement {
  css() {
    return `:host{display:flex;flex-direction:column;min-height:0;border:1px solid #c0c2c3;border-radius:3px;background:#f3f5f5}
    header{display:flex;align-items:center;height:29px;padding:0 6px 3px 4px;gap:7px;flex:none;color:#31363b}
    header h2{flex:1}
    header button{display:flex;color:#8c8f92;--hole:#fcfcfc}
    .content{flex:1;min-height:0;display:flex;flex-direction:column;margin:0 1px 1px}
    :host([padded]) .content{margin:6px 7px 7px;gap:8px}`;
  }
  html() {
    return `<header><h2>${this.getAttribute('heading')}</h2><button aria-label="Float"><flow-icon name="diamond" size="15"></flow-icon></button><button aria-label="Close"><flow-icon name="close"></flow-icon></button></header>
    <div class="content"><slot></slot></div>`;
  }
}
customElements.define('dock-panel', DockPanel);

class BlockTree extends FlowElement {
  css() {
    return `:host{display:flex;flex-direction:column;gap:8px;flex:1;min-height:0}
    input{height:30px;border:1px solid #bfc1c2;border-radius:3px;background:#fcfcfc;font:inherit;padding:0 6px;color:inherit}
    input::placeholder{color:#a3a5a8}
    .tree{flex:1;min-height:0;display:flex;border:1px solid #bfc1c2;border-radius:3px;background:#fcfcfc;overflow:hidden}
    .list{flex:1;overflow:hidden}
    h3{height:30px;line-height:29px;padding-left:6px;background:#eff0f1;border-bottom:1px solid #dcddde}
    li{display:flex;align-items:center;height:24px;padding-left:6px;gap:3px}
    li svg{width:14px;height:24px;flex:none}
    .add{display:flex;justify-content:center;align-items:center;gap:6px;height:32px;border:1px solid #cccecf;border-radius:3px;background:linear-gradient(#e4e5e6,#dadbdd);color:#a7a9ac}
    .add flow-icon{color:#85888b}`;
  }
  html() {
    const names = ['Audio', 'Convert', 'Debug', 'Demod', 'Digital', 'Event', 'FFT', 'File IO', 'Filter', 'Labels', 'MAC', 'Math', 'Misc', 'Network', 'Packet', 'Plotters', 'Random', 'SDR', 'Serialize', 'Sinks', 'Sources', 'Stream', 'Symbol', 'Testers', 'Utility'];
    const arrow = '<svg viewBox="0 0 14 24" fill="none"><path d="M3.500 0v5M3.500 18v6M9 12h5" stroke="#c3c5c6"/><path d="M1.500 7.500l4.500 4.500-4.500 4.500" stroke="#31363b" stroke-width="1.500"/></svg>';
    return `<input type="search" placeholder="Search blocks" aria-label="Search blocks">
    <div class="tree"><div class="list"><h3>Available Blocks</h3><ul>${names.map(n => `<li>${arrow}${n}</li>`).join('')}</ul></div><scroll-track vertical shown="541" rest="68"></scroll-track></div>
    <button class="add" disabled><flow-icon name="plus"></flow-icon>Add Block</button>`;
  }
}
customElements.define('block-tree', BlockTree);

class MessageLog extends FlowElement {
  css() {
    return `:host{display:flex;flex:1;min-height:0;border:1px solid #bfc1c2;border-radius:2px;background:#fcfcfc;margin-left:1px}
    .lines{flex:1;padding:4px}
    b{font-weight:400;color:#000}`;
  }
  html() {
    const rows = [['404298', 'MainWindow', 'Welcome to Pothos v0.7.0-g27cd407d'], ['534741', 'GraphEditor', 'Loading /home/jblum/Desktop/qpsk.pothos'], ['582777', 'GraphEditor', 'Loading /home/jblum/Desktop/noise.pothos'], ['824378', 'MainWindow', 'Initialization complete']];
    return `<div class="lines">${rows.map(([t, s, m]) => `<p><b class="strong">[00:25:27.${t}] PothosFlow.${s}:</b> ${m}</p>`).join('')}</div><scroll-track vertical shown="1" rest="0"></scroll-track>`;
  }
}
customElements.define('message-log', MessageLog);

class ActionList extends FlowElement {
  css() {
    return `:host{display:block;flex:1;border:1px solid #bfc1c2;border-radius:2px;background:#fcfcfc}
    li{display:flex;align-items:center;gap:5px;height:24px;padding-left:5px}
    li.undo{font-style:italic}`;
  }
  html() {
    return `<ul><li><flow-icon name="play" size="14"></flow-icon><span class="strong">Modified NumericEntry0</span></li><li class="undo"><flow-icon name="new" size="14"></flow-icon>Load topology from file</li></ul>`;
  }
}
customElements.define('action-list', ActionList);

/* ---------- editor window ---------- */
class ToolBar extends FlowElement {
  css() {
    return `:host{display:flex;align-items:center;gap:2px;height:34px;padding-left:5px;color:#31363b}
    .grip{width:4px;height:34px;border:solid #bcbec0;border-width:0 1px;margin-right:1px}
    button{display:flex;align-items:center;justify-content:center;width:32px;height:32px;border-radius:3px;position:relative}
    button.on{background:#c9cbcd}
    button.dim{color:#8e8f90}
    button.faint{color:#b4b5b6}
    button.menu flow-icon{margin-right:4px}
    button.menu::after{content:"";border:3px solid transparent;border-right-color:#31363b;border-left:0}
    hr{width:1px;height:34px;margin:0 2px 0 3px;border:0;background:#bcbec0}`;
  }
  html() {
    const items = 'new open save saveas saveall reload:menu exportpage closepage | zoomin zoomout zoomorig zoomfit | undo redo:faint | run:on cycle | cut copy:dim paste:dim trash:faint | grid | find | rotl rotr | props:dim';
    return '<div class="grip"></div>' + items.split(' ').map(s => {
      if (s === '|') return '<hr>';
      const [n, c] = s.split(':');
      return `<button class="${c || ''}" aria-label="${n}"><flow-icon name="${n}"></flow-icon></button>`;
    }).join('');
  }
}
customElements.define('tool-bar', ToolBar);

class EditorWindow extends FlowElement {
  css() {
    return `:host{display:flex;flex-direction:column;min-height:0;background:#eff0f1}
    nav{display:flex;height:32px}
    nav button{padding:0 10px 2px}
    .top{flex:1;min-height:0;display:flex;gap:3px;margin:3px 1px 2px}
    .work{flex:1;min-width:0;display:flex;flex-direction:column;gap:3px}
    .tabs{display:flex;height:28px}
    .tabs::after{content:"";flex:1;border-bottom:1px solid #bdbfc1}
    .tab{display:flex;align-items:center;padding:0 10px 0 12px;width:80px;justify-content:space-between;background:#cbcdce;border-bottom:1px solid #bdbfc1;border-radius:3px 3px 0 0}
    .tab.on{background:#eff0f1;border:1px solid #bdbfc1;border-bottom-color:transparent;padding-left:10px}
    .page{flex:1;min-height:0;display:flex;gap:3px;margin-bottom:1px}
    .side{width:28px;display:flex;flex-direction:column;border-right:1px solid #bdbfc1}
    .side button{display:flex;flex-direction:column;align-items:center;gap:10px;padding-top:8px;height:79px;font-size:11px;color:#55595d;border-radius:3px 0 0 3px}
    .side button+button{height:81px;background:#cbcdce}
    .side button:first-child{border:solid #bdbfc1;border-width:1px 0 1px 1px;margin-right:-1px;background:#eff0f1}
    .side span{writing-mode:vertical-rl;transform:rotate(180deg);line-height:16px}
    .frame{flex:1;display:grid;grid-template:1fr auto/1fr auto;border:1px solid #bdbfc1;border-radius:3px;background:#fcfcfc;overflow:hidden}
    .right{width:375px;display:flex;flex-direction:column;gap:1px}
    .right dock-panel{flex:1}
    .dtabs{display:flex;height:28px;margin-left:-1px}
    .dtabs::after{content:"";flex:1;border-top:1px solid #bdbfc1}
    .dtabs button{padding:0 8px;background:#cbcdce;border-top:1px solid #bdbfc1;border-radius:0 0 3px 3px}
    .dtabs button.on{background:#eff0f1;border:1px solid #bdbfc1;border-top-color:transparent}
    .bottom{display:flex;gap:3px;height:173px;margin:0 1px 1px}
    .bottom dock-panel:first-child{flex:1}
    .bottom dock-panel:last-child{width:369px}`;
  }
  html() {
    return `<window-bar>Pothos Flow - Editing /home/jblum/Desktop/qpsk.pothos*</window-bar>
    <nav>${['File', 'Edit', 'Execute', 'View', 'Tools', 'Help'].map(n => `<button>${n}</button>`).join('')}</nav>
    <tool-bar></tool-bar>
    <div class="top"><div class="work">
      <div class="tabs"><button class="tab on">qpsk*<flow-icon name="x" size="10"></flow-icon></button><button class="tab">noise<flow-icon name="x" size="10"></flow-icon></button></div>
      <div class="page"><div class="side"><button><flow-icon name="popout"></flow-icon><span>Main</span></button><button><flow-icon name="popin"></flow-icon><span>Display</span></button></div>
      <div class="frame"><flow-canvas></flow-canvas><scroll-track vertical shown="473" rest="235"></scroll-track><scroll-track shown="800" rest="433"></scroll-track></div></div>
    </div>
    <div class="right"><dock-panel heading="Block Tree" padded><block-tree></block-tree></dock-panel>
      <div class="dtabs"><button>Host Explorer</button><button class="on">Block Tree</button><button>Affinity Zones</button></div></div></div>
    <div class="bottom"><dock-panel heading="Message Window"><message-log></message-log></dock-panel><dock-panel heading="Graph Actions"><action-list></action-list></dock-panel></div>`;
  }
}
customElements.define('editor-window', EditorWindow);

class PothosDesktop extends FlowElement {
  css() {
    return `:host{display:grid;grid-template-columns:8fr 7fr;height:100vh}
    .screen{display:flex;flex-direction:column;min-width:0;min-height:0}
    .screen>:first-child{flex:1}
    .short{padding-bottom:30px}`;
  }
  html() {
    return `<div class="screen"><display-window></display-window><task-bar></task-bar></div><div class="screen short"><editor-window></editor-window></div>`;
  }
}
customElements.define('pothos-desktop', PothosDesktop);
</script>
</body>
</html>
